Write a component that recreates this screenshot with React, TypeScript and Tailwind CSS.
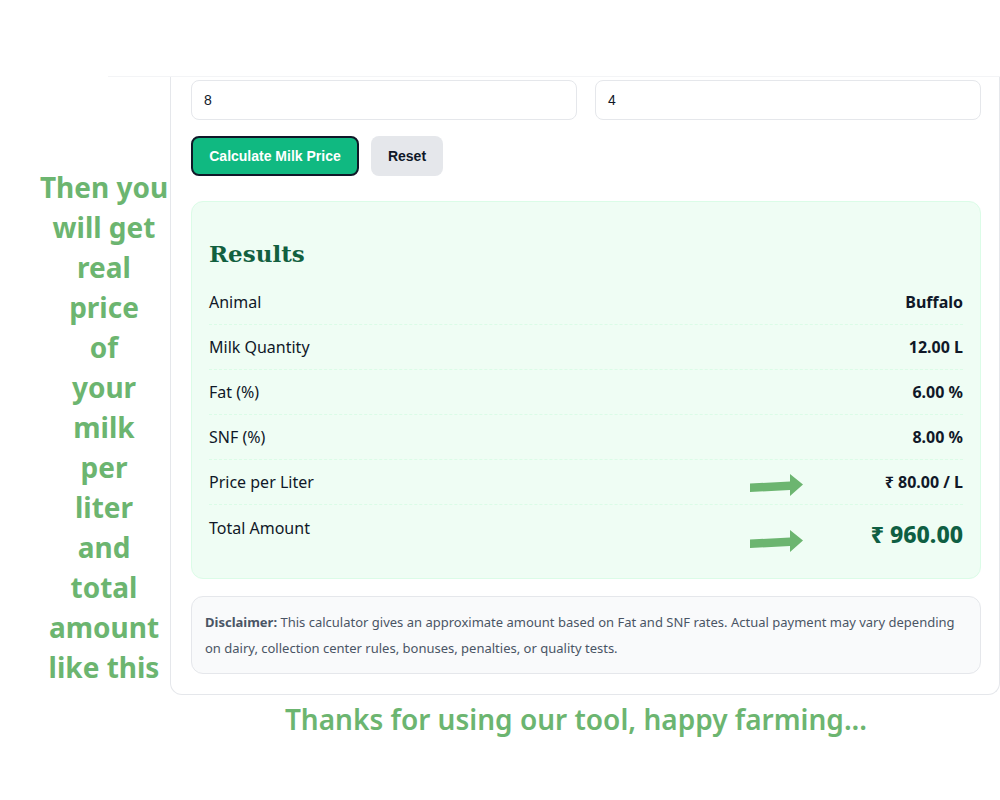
import React from "react";

const rows = [
  { label: "Animal", value: "Buffalo" },
  { label: "Milk Quantity", value: "12.00 L" },
  { label: "Fat (%)", value: "6.00 %" },
  { label: "SNF (%)", value: "8.00 %" },
  { label: "Price per Liter", value: "₹ 80.00 / L" },
];

function Arrow({ className }: { className: string }) {
  return (
    <svg
      className={className}
      width="54"
      height="24"
      viewBox="0 0 54 24"
      fill="#6cb570"
    >
      <polygon points="0,10.5 40,8.5 40,1 53,11.5 40,23 40,17 0,19" />
    </svg>
  );
}

export default function App() {
  return (
    <div className="relative w-[1000px] h-[800px] overflow-hidden bg-white font-['Noto_Sans',sans-serif]">
      <div className="h-[76px]" />

      {/* pasted calculator screenshot */}
      <div className="ml-[108px] w-[892px] border-t border-gray-100 flex">
        <div className="w-[62px] shrink-0" />
        <div className="flex-1 border-l border-b border-r border-gray-200 rounded-b-xl pl-5 pr-[18px] pt-[3px] pb-5">
          <div className="grid grid-cols-2 gap-[18px]">
            <div className="h-[40px] rounded-lg border border-gray-200 px-3 flex items-center text-sm text-gray-900 font-['Liberation_Sans',sans-serif]">
              8
            </div>
            <div className="h-[40px] rounded-lg border border-gray-200 px-3 flex items-center text-sm text-gray-900 font-['Liberation_Sans',sans-serif]">
              4
            </div>
          </div>

          <div className="flex gap-3 mt-4 font-['Liberation_Sans',sans-serif]">
            <button className="h-[40px] w-[168px] rounded-lg bg-[#10b981] border-2 border-gray-900 text-white text-sm font-bold">
              Calculate Milk Price
            </button>
            <button className="h-[40px] w-[72px] rounded-lg bg-gray-200 text-gray-900 text-sm font-bold">
              Reset
            </button>
          </div>

          {/* Results */}
          <div className="relative mt-[25px] rounded-xl border border-green-100 bg-[#effdf4] px-[17px] pt-[34px] pb-[19px]">
            <h2 className="font-['DejaVu_Serif',serif] text-[23px] font-bold leading-[36px] text-[#12603f] mb-[8px]">
              Results
            </h2>
            {rows.map((r) => (
              <div
                key={r.label}
                className="h-[45px] flex items-center justify-between border-b border-dashed border-green-100 text-[16px] text-gray-900"
              >
                <span>{r.label}</span>
                <span className="font-bold">{r.value}</span>
              </div>
            ))}
            <div className="flex justify-between pt-[12px] h-[54px] text-gray-900">
              <span className="text-[16px] leading-[22px]">Total Amount</span>
              <span className="text-[23px] leading-[34px] font-extrabold text-[#0f5f43]">
                ₹ 960.00
              </span>
            </div>
            <Arrow className="absolute left-[558px] top-[271px]" />
            <Arrow className="absolute left-[558px] top-[327px]" />
          </div>

          {/* Disclaimer */}
          <div className="mt-[17px] rounded-xl border border-gray-200 bg-gray-50 px-[13px] py-[12px] text-[13px] leading-[26px] text-gray-600">
            <span className="font-bold">Disclaimer:</span> This calculator gives
            an approximate amount based on Fat and SNF rates. Actual payment may
            vary depending on dairy, collection center rules, bonuses,
            penalties, or quality tests.
          </div>
        </div>
      </div>

      {/* caption */}
      <div className="pl-[152px] mt-[6px] text-center text-[28px] font-semibold text-[#6cb570] leading-[36px]">
        Thanks for using our tool, happy farming...
      </div>

      {/* annotation overlay */}
      <div className="absolute left-[34px] top-[167px] w-[140px] text-center text-[28px] font-bold leading-[40px] text-[#6cb570]">
        Then you
        <br />
        will get
        <br />
        real
        <br />
        price
        <br />
        of
        <br />
        your
        <br />
        milk
        <br />
        per
        <br />
        liter
        <br />
        and
        <br />
        total
        <br />
        amount
        <br />
        like this
      </div>
    </div>
  );
}
